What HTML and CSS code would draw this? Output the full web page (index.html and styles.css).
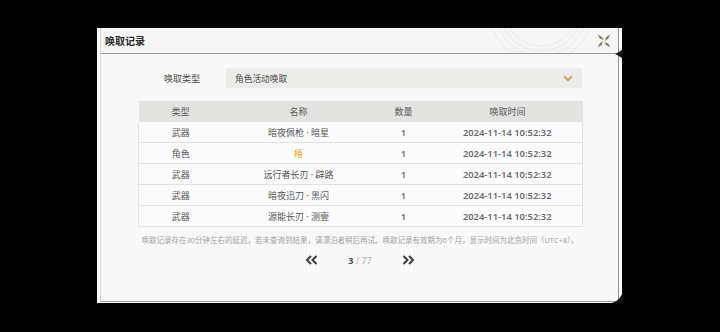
FILE: index.html
```html
<!DOCTYPE html>
<html lang="zh-CN">
<head>
    <meta charset="UTF-8">
    <title>唤取记录</title>
    <link rel="stylesheet" href="styles.css">
</head>
<body>
    <div class="modal">
        <div class="frame">
            <div class="modal-head">
                <svg class="head-deco" width="160" height="25" viewBox="0 0 160 25">
                    <circle cx="80" cy="-18" r="36" />
                    <circle cx="80" cy="-18" r="41" />
                    <circle cx="80" cy="-18" r="46" />
                    <circle cx="80" cy="-18" r="52" />
                </svg>
                <span class="title">唤取记录</span>
                <div class="close">
                    <svg width="14" height="14" viewBox="0 0 14 14">
                        <path d="M0.5 0.5 L4.6 2.8 L7 6 L2.8 4.6 Z" />
                        <path d="M13.5 0.5 L11.2 4.6 L8 7 L9.4 2.8 Z" />
                        <path d="M13.5 13.5 L9.4 11.2 L7 8 L11.2 9.4 Z" />
                        <path d="M0.5 13.5 L2.8 9.4 L6 7 L4.6 11.2 Z" />
                    </svg>
                </div>
            </div>

            <div class="modal-body">
                <div class="panel">
                    <div class="type-row">
                        <span class="type-label">唤取类型</span>
                        <div class="select">
                            <span>角色活动唤取</span>
                            <svg width="10" height="7" viewBox="0 0 10 7"><path d="M1 1.2 L5 5.2 L9 1.2" /></svg>
                        </div>
                    </div>

                    <table class="records">
                        <thead>
                            <tr>
                                <th class="c-type">类型</th>
                                <th class="c-name">名称</th>
                                <th class="c-count">数量</th>
                                <th class="c-time">唤取时间</th>
                            </tr>
                        </thead>
                        <tbody>
                            <tr><td>武器</td><td>暗夜佩枪 · 暗星</td><td class="num">1</td><td class="num">2024-11-14 10:52:32</td></tr>
                            <tr><td>角色</td><td class="gold">椿</td><td class="num">1</td><td class="num">2024-11-14 10:52:32</td></tr>
                            <tr><td>武器</td><td>远行者长刃 · 辟路</td><td class="num">1</td><td class="num">2024-11-14 10:52:32</td></tr>
                            <tr><td>武器</td><td>暗夜迅刀 · 黑闪</td><td class="num">1</td><td class="num">2024-11-14 10:52:32</td></tr>
                            <tr><td>武器</td><td>源能长刃 · 测壹</td><td class="num">1</td><td class="num">2024-11-14 10:52:32</td></tr>
                        </tbody>
                    </table>

                    <p class="note">唤取记录存在30分钟左右的延迟，若未查询到结果，请漂泊者稍后再试。唤取记录有效期为6个月，显示时间为北京时间（UTC+8）。</p>

                    <div class="pager">
                        <svg class="pager-arrow" width="13" height="10" viewBox="0 0 13 10">
                            <path d="M6 1 L2 5 L6 9" /><path d="M11.5 1 L7.5 5 L11.5 9" />
                        </svg>
                        <span class="page-num"><b>3</b> / 77</span>
                        <svg class="pager-arrow" width="13" height="10" viewBox="0 0 13 10">
                            <path d="M1.5 1 L5.5 5 L1.5 9" /><path d="M7 1 L11 5 L7 9" />
                        </svg>
                    </div>
                </div>
            </div>

            <svg class="notch-side" width="8" height="10" viewBox="0 0 8 10"><path d="M8 0 L8 10 Q3 6 0 5 Q3 4 8 0 Z" /></svg>
            <svg class="notch-corner" width="11" height="12" viewBox="0 0 11 12"><path d="M11 0 L11 12 L0 12 Q9 9 11 0 Z" /></svg>
        </div>
    </div>
</body>
</html>
```

FILE: styles.css
```css
body {
    margin: 0;
    padding: 28px 0 0 97px;
    background-color: #000;
    font-family: "Noto Sans", "Noto Sans CJK SC", sans-serif;
    height: 332px;
    box-sizing: border-box;
    overflow: hidden;
}

.modal {
    width: 525px;
    height: 275px;
    box-sizing: border-box;
    padding: 0 3px 1px 3px;
    background-color: #fdfdfd;
}

.frame {
    position: relative;
    height: 100%;
    box-sizing: border-box;
    border-left: 1px solid #d6d6d6;
    border-right: 1px solid #8f8f8f;
    border-bottom: 1px solid #a0a0a0;
    background-color: #f7f8f7;
    display: flex;
    flex-direction: column;
}

/* Header */
.modal-head {
    position: relative;
    height: 25px;
    border-bottom: 1px solid #9a9a9a;
    background-color: #f4f5f4;
    display: flex;
    align-items: center;
    justify-content: space-between;
    padding: 0 7px 0 4px;
    overflow: hidden;
}

.head-deco {
    position: absolute;
    left: 360px;
    top: 0;
}

.head-deco circle {
    fill: none;
    stroke: #e9eae9;
    stroke-width: 1;
}

.title {
    position: relative;
    font-size: 10px;
    font-weight: bold;
    color: #2b2b2b;
}

.close {
    position: relative;
    width: 14px;
    height: 14px;
}

.close svg {
    display: block;
}

.close path {
    fill: #8a7b5e;
}

/* Body */
.modal-body {
    flex: 1;
}

.panel {
    width: 444px;
    padding-top: 14px;
    margin-left: 37px;
}

.type-row {
    display: flex;
    align-items: center;
    justify-content: flex-end;
    gap: 26px;
}

.type-label {
    font-size: 9px;
    color: #4a4a4a;
}

.select {
    width: 356px;
    height: 20px;
    box-sizing: border-box;
    background-color: #ecedeb;
    display: flex;
    align-items: center;
    justify-content: space-between;
    padding: 0 9px 0 9px;
    font-size: 8.7px;
    color: #4a4a4a;
}

.select path {
    fill: none;
    stroke: #c7a257;
    stroke-width: 1.8;
}

/* Table */
.records {
    width: 444px;
    margin-top: 13px;
    border-collapse: collapse;
    table-layout: fixed;
    font-size: 9px;
    color: #555;
    text-align: center;
}

.records th {
    height: 21px;
    padding: 0;
    font-weight: normal;
    color: #5a5a5a;
    background-color: #e2e2e0;
}

.records td {
    height: 20px;
    padding: 0;
    background-color: #fcfcfc;
    border-bottom: 1px solid #e2e2e2;
}

.records tbody tr td:first-child {
    border-left: 1px solid #e6e6e6;
}

.records tbody tr td:last-child {
    border-right: 1px solid #e6e6e6;
}

.c-type { width: 84px; }
.c-name { width: 152px; }
.c-count { width: 58px; }
.c-time { width: 150px; }

.records td.num {
    font-weight: 600;
    font-size: 9.4px;
    color: #6c6c6c;
}

.records td.gold {
    color: #e6a91e;
}

/* Note */
.note {
    margin: 8px 0 0 0;
    font-size: 7.5px;
    line-height: 10px;
    color: #a4a4a4;
    text-align: center;
    white-space: nowrap;
}

/* Pagination */
.pager {
    margin-top: 9px;
    display: flex;
    align-items: center;
    justify-content: center;
    gap: 30px;
    height: 12px;
}

.pager-arrow path {
    fill: none;
    stroke: #3c3c3c;
    stroke-width: 2;
}

.page-num {
    font-size: 9px;
    color: #b0b0b0;
}

.page-num b {
    color: #4a4a4a;
}

/* Frame cut-outs */
.notch-side {
    position: absolute;
    right: -5px;
    top: 21px;
}

.notch-corner {
    position: absolute;
    right: -5px;
    bottom: -2px;
}

.notch-side path,
.notch-corner path {
    fill: #111;
}
```
